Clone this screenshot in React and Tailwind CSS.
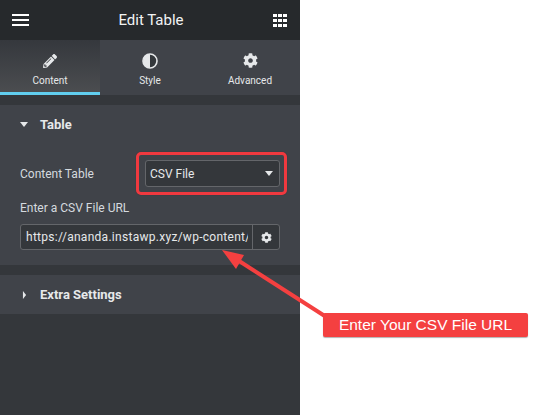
import { FaCog, FaPencilAlt } from "react-icons/fa";

const font = { fontFamily: '"Roboto", sans-serif' };

function Caret({ className }) {
  return (
    <svg viewBox="0 0 8 5" className={className}>
      <path d="M0 0h8L4 5z" fill="currentColor" />
    </svg>
  );
}

function Tab({ label, active, children }) {
  return (
    <div
      className={
        "flex flex-1 flex-col items-center pt-[12px] border-b-[3px] " +
        (active ? "border-[#61ceef] bg-gradient-to-b from-[#35383d] to-[#4b4d50]" : "border-transparent")
      }
    >
      <div className="flex h-[17px] items-center justify-center">{children}</div>
      <div className="mt-[5px] text-[10px] leading-[13px] text-[#e6e8ea]">{label}</div>
    </div>
  );
}

export default function App() {
  return (
    <div className="relative h-[415px] w-[541px] overflow-hidden bg-white" style={font}>
      <div className="flex h-[415px] w-[300px] flex-col bg-[#34373b]">
        <header className="flex h-[40px] items-center justify-between bg-[#26292c] pl-[12px] pr-[13px]">
          <div className="flex w-[17px] flex-col gap-[2.5px]">
            <span className="h-[2.5px] bg-white" />
            <span className="h-[2.5px] bg-white" />
            <span className="h-[2.5px] bg-white" />
          </div>
          <h1 className="text-[15px] text-[#f2f3f4]">Edit Table</h1>
          <div className="grid w-[14px] grid-cols-3 gap-x-[1px] gap-y-[2px]">
            {[0, 1, 2, 3, 4, 5, 6, 7, 8].map((i) => (
              <span key={i} className="h-[3px] bg-white" />
            ))}
          </div>
        </header>

        <nav className="flex h-[55px] bg-[#404349]">
          <Tab label="Content" active>
            <FaPencilAlt size={14} className="text-[#e6e8ea]" />
          </Tab>
          <Tab label="Style">
            <svg viewBox="0 0 16 16" className="h-[16px] w-[16px]">
              <circle cx="8" cy="8" r="7" fill="#34383c" stroke="#e6e8ea" strokeWidth="1.6" />
              <path d="M8 1a7 7 0 0 0 0 14z" fill="#e6e8ea" />
            </svg>
          </Tab>
          <Tab label="Advanced">
            <FaCog size={15} className="text-[#e6e8ea]" />
          </Tab>
        </nav>

        <section className="mt-[10px] bg-[#404349]">
          <div className="flex h-[39px] items-center pl-[20px]">
            <Caret className="h-[5px] w-[8px] text-[#e6e8ea]" />
            <span className="ml-[12px] text-[13px] font-bold text-[#e6e8ea]">Table</span>
          </div>
          <div className="px-[20px] pb-[15px] pt-[16px]">
            <div className="flex items-center justify-between">
              <label className="text-[12px] text-[#d5dadf]">Content Table</label>
              <div className="flex h-[27px] w-[135px] items-center justify-between rounded-[3px] border border-[#64666a] bg-[#34373b] pl-[4px] pr-[6px]">
                <span className="text-[12px] text-[#e6e8ea]">CSV File</span>
                <Caret className="h-[5px] w-[8px] text-[#e6e8ea]" />
              </div>
            </div>
            <label className="mt-[13px] block text-[12px] leading-[16px] text-[#d5dadf]">Enter a CSV File URL</label>
            <div className="mt-[8px] flex h-[26px] items-center rounded-[3px] border border-[#64666a] bg-[#34373b]">
              <div className="w-[227px] overflow-hidden whitespace-nowrap pl-[5px] text-[12px] tracking-[0.28px] text-[#e6e8ea]">
                https://ananda.instawp.xyz/wp-content/uploads
              </div>
              <div className="ml-[4px] flex h-full flex-1 items-center justify-center border-l border-[#64666a]">
                <FaCog size={11} className="text-[#e6e8ea]" />
              </div>
            </div>
          </div>
        </section>

        <section className="mt-[10px] flex h-[39px] items-center bg-[#404349] pl-[22px]">
          <Caret className="h-[8px] w-[5px] -rotate-90 scale-x-[1.6] text-[#e6e8ea]" />
          <span className="ml-[13px] text-[13px] font-bold text-[#e6e8ea]">Extra Settings</span>
        </section>
      </div>

      <svg viewBox="0 0 541 415" className="absolute inset-0 h-[415px] w-[541px]">
        <path d="M331 320L236 259" stroke="#f44040" strokeWidth="4" fill="none" />
        <path d="M222 250L244 255L236 269z" fill="#f44040" />
      </svg>

      <div
        className="absolute left-[323px] top-[313px] flex h-[24px] w-[205px] items-center justify-center rounded-[2px] bg-[#f44040] text-[15.5px] text-white shadow-[0_1px_1px_rgba(0,0,0,0.3)]"
        style={{ fontFamily: '"Liberation Sans", sans-serif' }}
      >
        Enter Your CSV File URL
      </div>

      <div className="absolute left-[136px] top-[152px] h-[43px] w-[151px] rounded-[5px] border-[3px] border-[#f0393f] shadow-[0_0_1px_rgba(0,0,0,0.4)]" />
    </div>
  );
}
